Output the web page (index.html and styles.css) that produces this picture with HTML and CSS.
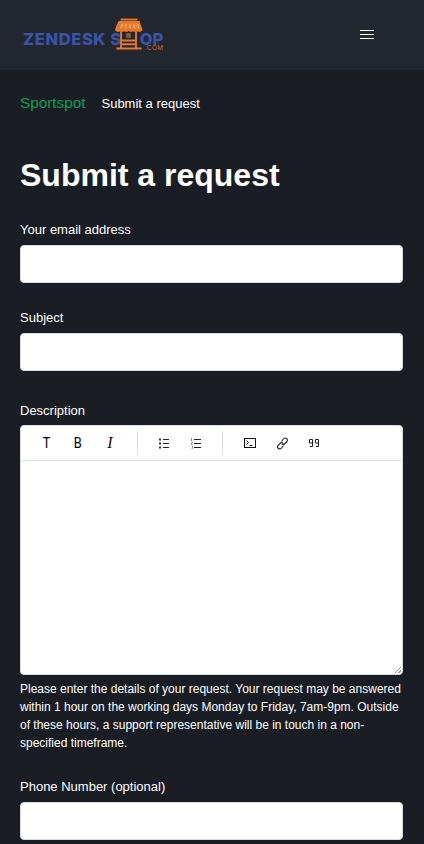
FILE: index.html
```html
<!DOCTYPE html>
<html lang="en">
<head>
<meta charset="utf-8">
<title>Submit a request</title>
<link rel="stylesheet" href="styles.css">
</head>
<body>
<header class="site-header">
  <a class="logo" href="#">
    <span class="logo-text">ZENDESK S</span>
    <svg class="logo-icon" width="28" height="32" viewBox="0 0 30 34" aria-hidden="true">
      <g fill="none" stroke="#e8782a" stroke-width="2">
        <path d="M6 1.500h18"/>
        <path d="M4.500 4h21l3 8.500q-2.300 2.500-4.500 0q-2.300 2.500-4.500 0q-2.300 2.500-5 0q-2.300 2.500-4.500 0q-2.300 2.500-4.500 0q-2.300 2.500-4.500 0z" fill="#e8782a"/>
        <path d="M6.500 14v18M22.500 14v18M1.500 32.500h27M6.500 24h16M6.500 28h16"/>
      </g>
      <path d="M8 6l-1.500 5M12 6l-.8 5M16 6v5M20 6l.8 5M24 6l1.500 5" stroke="#f6c79f" stroke-width="1"/>
      <rect x="12" y="16" width="5" height="5" fill="#8a5a3a"/>
    </svg>
    <span class="logo-text logo-end">OP</span>
    <span class="logo-com">.COM</span>
  </a>
  <button class="menu" type="button" aria-label="Menu">
    <span></span><span></span><span></span>
  </button>
</header>
<main class="page">
  <nav class="crumbs">
    <a class="crumb-link" href="#">Sportspot</a>
    <span class="crumb-current">Submit a request</span>
  </nav>
  <h1 class="title">Submit a request</h1>
  <form class="form">
    <div class="field">
      <label class="label">Your email address</label>
      <input class="input" type="text">
    </div>
    <div class="field">
      <label class="label">Subject</label>
      <input class="input" type="text">
    </div>
    <div class="field field-desc">
      <label class="label label-desc">Description</label>
      <div class="editor">
        <div class="toolbar">
          <div class="tool-group">
            <span class="tool"><span class="glyph">T</span></span>
            <span class="tool"><span class="glyph">B</span></span>
            <span class="tool tool-i">I</span>
          </div>
          <div class="tool-group tool-group-mid">
            <span class="tool">
              <svg width="10" height="11" viewBox="0 0 10 11" aria-hidden="true"><path d="M4 1.500h6M4 5.500h6M4 9.500h6" stroke="#222" fill="none"/><path d="M0 .5h2v2H0zM0 4.500h2v2H0zM0 8.500h2v2H0z" fill="#333"/></svg>
            </span>
            <span class="tool">
              <svg width="10" height="11" viewBox="0 0 10 11" aria-hidden="true"><path d="M3 1.500h7M3 5.500h7M3 9.500h7" stroke="#222" fill="none"/><path d="M.5 0v3M.5 4h1v1h-1v1.500h1M.5 8h1v2.500h-1" stroke="#777" fill="none" stroke-width=".8"/></svg>
            </span>
          </div>
          <div class="tool-group tool-group-last">
            <span class="tool">
              <svg width="12" height="10" viewBox="0 0 12 10" aria-hidden="true"><rect x=".5" y=".5" width="11" height="9" fill="none" stroke="#111"/><path d="M2.500 2.500l2 2-2 2M5.500 7.500h3" fill="none" stroke="#111"/></svg>
            </span>
            <span class="tool">
              <svg width="13" height="13" viewBox="0 0 13 13" aria-hidden="true"><g fill="none" stroke="#222" stroke-width="1.100"><path d="M5.500 4.500l2-2.500a1.900 1.900 0 0 1 3.500 2.500l-2.500 2.500a1.800 1.800 0 0 1-2.800-.5"/><path d="M7.500 8.500l-2 2.500a1.900 1.900 0 0 1-3.500-2.500l2.500-2.500a1.800 1.800 0 0 1 2.800.5"/></g></svg>
            </span>
            <span class="tool">
              <svg width="10" height="8" viewBox="0 0 10 8" aria-hidden="true"><path d="M.5.500h3v7H1M.5.500v3.500h3M6.500.500h3v7H7M6.500.500v3.500h3" fill="none" stroke="#222"/></svg>
            </span>
          </div>
        </div>
        <textarea class="editor-body"></textarea>
      </div>
      <p class="hint">Please enter the details of your request. Your request may be answered within 1 hour on the working days Monday to Friday, 7am-9pm. Outside of these hours, a support representative will be in touch in a non-specified timeframe.</p>
    </div>
    <div class="field">
      <label class="label">Phone Number (optional)</label>
      <input class="input" type="text">
    </div>
  </form>
</main>
</body>
</html>
```

FILE: styles.css
```css
* { box-sizing: border-box; }

html, body {
  margin: 0;
  height: 844px;
  overflow: hidden;
}

body {
  background: #1a1d24;
  color: #fff;
  font-family: "Liberation Sans", Arial, sans-serif;
}

.site-header {
  height: 70px;
  background: #23272f;
  display: flex;
  align-items: center;
  justify-content: space-between;
  padding: 0 50px 0 23px;
}

.logo {
  position: relative;
  display: flex;
  align-items: center;
  height: 70px;
  padding-top: 8px;
  text-decoration: none;
}

.logo-text {
  font-family: Inter, "Liberation Sans", sans-serif;
  font-weight: 800;
  font-size: 16.500px;
  letter-spacing: .6px;
  color: #3a54a8;
  line-height: 12px;
}

.logo-end {
  letter-spacing: 0;
}

.logo-icon {
  flex: none;
  margin: -11px -3px 0 -7px;
}

.logo-com {
  position: absolute;
  right: 0;
  top: 45px;
  font-family: Inter, "Liberation Sans", sans-serif;
  font-size: 6.500px;
  line-height: 6px;
  letter-spacing: .3px;
  color: #c46a2a;
}

.menu {
  width: 14px;
  height: 10px;
  padding: 0;
  border: 0;
  background: none;
  display: flex;
  flex-direction: column;
  gap: 3px;
}

.menu span {
  display: block;
  height: 1px;
  flex: none;
  background: #fff;
}

.page {
  padding: 0 21px 0 20px;
}

.crumbs {
  display: flex;
  align-items: center;
  gap: 16px;
  height: 20px;
  margin-top: 23px;
}

.crumb-link {
  color: #0f9d58;
  font-size: 15.300px;
  text-decoration: none;
}

.crumb-current {
  font-size: 13px;
  font-weight: 400;
  color: #fff;
}

.title {
  margin: 40px 0 0;
  font-size: 32px;
  line-height: 44px;
  font-weight: 700;
}

.form {
  margin-top: 22px;
}

.field {
  margin-bottom: 24px;
}

.field-desc {
  margin-top: 29px;
}

.label {
  display: block;
  font-size: 13px;
  line-height: 20px;
  padding-top: 1px;
  height: 20px;
  margin-bottom: 6px;
}

.label-desc {
  margin-bottom: 5px;
}

.input {
  display: block;
  width: 100%;
  height: 38px;
  border: 1px solid #d8dcde;
  border-radius: 4px;
  background: #fff;
  padding: 0 10px;
}

.editor {
  background: #fff;
  border-radius: 4px;
  border: 1px solid #d8dcde;
  height: 250px;
  display: flex;
  flex-direction: column;
  overflow: hidden;
}

.toolbar {
  height: 35px;
  flex: none;
  display: flex;
  align-items: center;
  padding-left: 9px;
  border-bottom: 1px solid #e0e2e4;
}

.tool-group {
  display: flex;
  height: 24px;
  padding-right: 11px;
  margin-right: 10px;
  border-right: 1px solid #d8dcde;
}

.tool-group-mid {
  padding-right: 10px;
  margin-right: 11px;
}

.tool-group-last {
  border-right: 0;
  margin-right: 0;
}

.tool {
  width: 32px;
  display: flex;
  align-items: center;
  justify-content: center;
  color: #111;
}

.glyph {
  display: block;
  font-family: Roboto, "Liberation Sans", sans-serif;
  font-weight: 400;
  font-size: 15px;
  color: #000;
  transform: scaleX(.85);
}

.tool-i {
  font-family: "Liberation Serif", serif;
  font-style: italic;
  font-size: 16px;
}

.editor-body {
  flex: 1;
  display: block;
  width: 100%;
  border: 0;
  outline: 0;
  padding: 8px;
  background: #fff;
}

.editor-body::-webkit-resizer {
  background: linear-gradient(135deg, transparent 45%, #999 45%, #999 58%, transparent 58%, transparent 72%, #999 72%, #999 85%, transparent 85%) right 1px bottom 1px / 6px 6px no-repeat;
}

.hint {
  margin: 5px 0 0;
  font-size: 12px;
  line-height: 18px;
  color: #fff;
}
```
